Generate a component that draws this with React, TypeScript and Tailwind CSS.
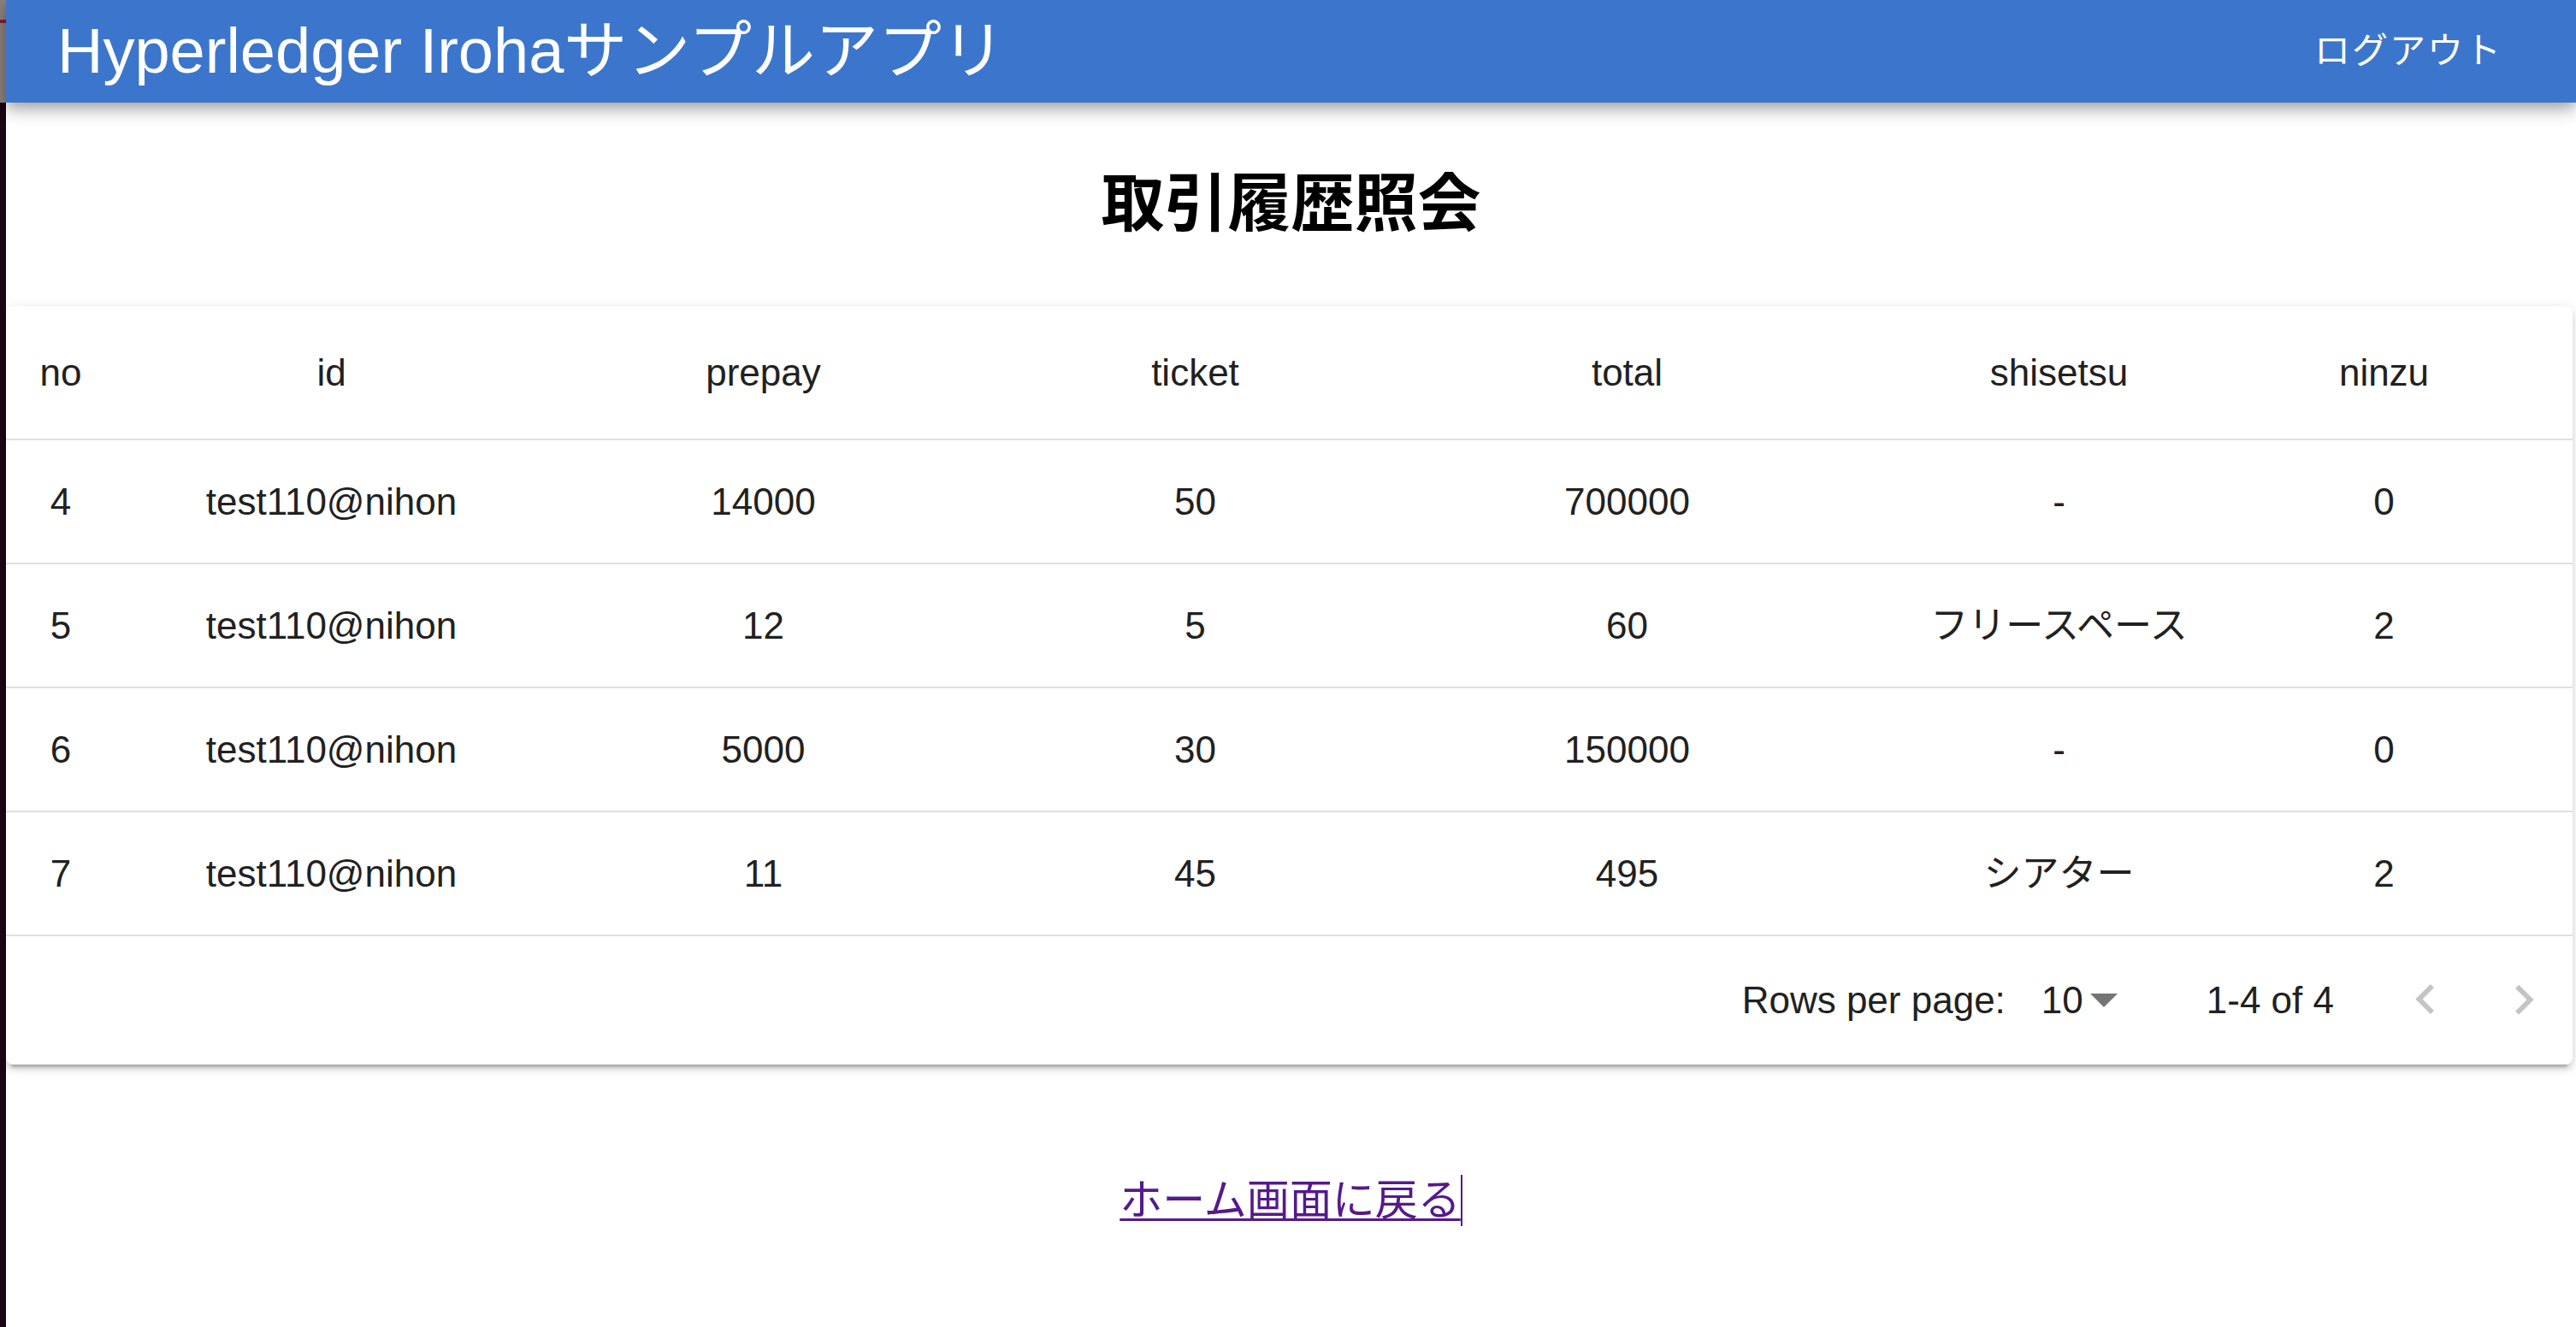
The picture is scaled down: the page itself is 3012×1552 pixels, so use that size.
const rows = [
  { no: 4, id: 'test110@nihon', prepay: 14000, ticket: 50, total: 700000, shisetsu: '-', ninzu: 0 },
  { no: 5, id: 'test110@nihon', prepay: 12, ticket: 5, total: 60, shisetsu: 'フリースペース', ninzu: 2 },
  { no: 6, id: 'test110@nihon', prepay: 5000, ticket: 30, total: 150000, shisetsu: '-', ninzu: 0 },
  { no: 7, id: 'test110@nihon', prepay: 11, ticket: 45, total: 495, shisetsu: 'シアター', ninzu: 2 },
];

const columns = ['no', 'id', 'prepay', 'ticket', 'total', 'shisetsu', 'ninzu'] as const;

const gridCols = 'grid grid-cols-[128px_505px_505px_505px_505px_505px_255px_1fr]';

export default function App() {
  return (
    <div className="flex min-h-[1552px] w-full bg-white font-['Liberation_Sans','Noto_Sans_CJK_JP',sans-serif] text-[#212121]">
      {/* edge of the window behind */}
      <div className="flex w-[7px] shrink-0 flex-col">
        <div className="h-[120px] bg-[#8c7f7e] pt-[23px]">
          <div className="h-[4px] bg-[#7a2535]" />
        </div>
        <div className="flex-1 bg-[#1a0614]" />
      </div>

      <div className="flex min-w-0 flex-1 flex-col">
        {/* app bar */}
        <header className="relative z-10 flex h-[120px] items-center justify-between bg-[#3c76cc] pl-[60px] pr-[86px] text-white shadow-[0_6px_12px_-3px_rgba(0,0,0,0.2),0_12px_15px_0_rgba(0,0,0,0.14),0_3px_30px_0_rgba(0,0,0,0.12)]">
          <div className="text-[74px] leading-none">Hyperledger Irohaサンプルアプリ</div>
          <button className="text-[42px] leading-none tracking-[2px]">ログアウト</button>
        </header>

        <div className="flex h-[238px] items-center justify-center">
          <h1 className="text-[74px] font-bold leading-none text-black">取引履歴照会</h1>
        </div>

        {/* table card */}
        <div className="mr-[4px] rounded-[8px] bg-white text-[44px] shadow-[0_3px_15px_rgba(0,0,0,0.12),0_6px_6px_rgba(0,0,0,0.1),0_9px_3px_-6px_rgba(0,0,0,0.2)]">
          <div className={`${gridCols} h-[157px] items-center border-b-2 border-[#e0e0e0]`}>
            {columns.map((c) => (
              <div key={c} className="text-center">{c}</div>
            ))}
          </div>
          {rows.map((r) => (
            <div key={r.no} className={`${gridCols} h-[145px] items-center border-b-2 border-[#e0e0e0]`}>
              {columns.map((c) => (
                <div key={c} className="text-center">{r[c]}</div>
              ))}
            </div>
          ))}

          {/* pagination */}
          <div className="flex h-[150px] items-center justify-end pr-[22px]">
            <span>Rows per page:</span>
            <div className="ml-[42px] flex items-center">
              <span>10</span>
              <svg className="ml-[8px] h-[16px] w-[32px]" viewBox="0 0 32 16">
                <polygon points="0,0 32,0 16,16" fill="#757575" />
              </svg>
            </div>
            <span className="ml-[104px]">1-4 of 4</span>
            <svg className="ml-[72px] h-[70px] w-[70px]" viewBox="0 0 24 24">
              <path d="M15.41 16.09l-4.58-4.59 4.58-4.59L14 5.5l-6 6 6 6z" fill="#c4c4c4" />
            </svg>
            <svg className="ml-[45px] h-[70px] w-[70px]" viewBox="0 0 24 24">
              <path d="M8.59 16.34l4.58-4.59-4.58-4.59L10 5.75l6 6-6 6z" fill="#c4c4c4" />
            </svg>
          </div>
        </div>

        <div className="mt-[129px] flex justify-center">
          <a href="#" className="border-r-2 border-[#551a8b] text-[50px] leading-[1.2] text-[#551a8b] underline decoration-[3px] underline-offset-[4px]">
            ホーム画面に戻る
          </a>
        </div>
      </div>
    </div>
  );
}
